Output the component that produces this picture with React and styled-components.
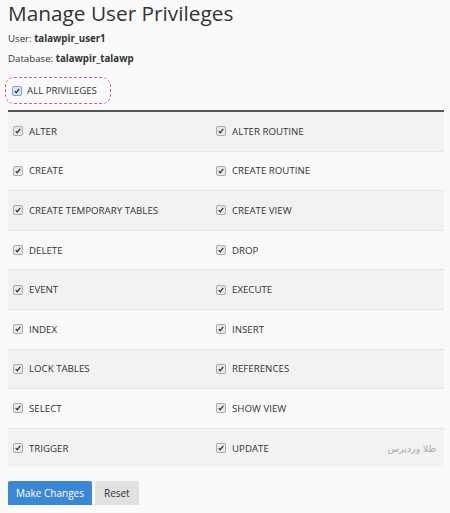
import React from "react";
import styled, { createGlobalStyle } from "styled-components";

const GlobalStyle = createGlobalStyle`
  body {
    margin: 0;
    background: #fafafa;
    font-family: "Open Sans", "Noto Sans", sans-serif;
    color: #333;
  }
`;

const privileges = [
  ["ALTER", "ALTER ROUTINE"],
  ["CREATE", "CREATE ROUTINE"],
  ["CREATE TEMPORARY TABLES", "CREATE VIEW"],
  ["DELETE", "DROP"],
  ["EVENT", "EXECUTE"],
  ["INDEX", "INSERT"],
  ["LOCK TABLES", "REFERENCES"],
  ["SELECT", "SHOW VIEW"],
  ["TRIGGER", "UPDATE"],
];

const Page = styled.div`
  padding: 0 6px 0 8px;
`;

const Title = styled.h1`
  margin: 0;
  font-size: 20.8px;
  font-weight: 400;
  line-height: 26px;
  color: #333;
`;

const Info = styled.p`
  margin: 0;
  font-size: 9.7px;
  line-height: 20px;
  b {
    font-weight: 700;
  }
`;

const InfoList = styled.div`
  padding-top: 3px;
`;

const AllBox = styled.label`
  display: inline-flex;
  align-items: center;
  gap: 5px;
  margin: 8px 0 6px -3px;
  padding: 0 13px 0 6px;
  height: 25px;
  border: 1px dashed #f0507a;
  border-radius: 9px;
  font-size: 9.7px;
`;

const Box = styled.span`
  display: inline-flex;
  align-items: center;
  justify-content: center;
  width: 8px;
  height: 8px;
  border: 1px solid ${(p) => (p.$focus ? "#7b9fe0" : "#aaa")};
  border-radius: 2px;
  background: ${(p) => (p.$focus ? "#dde6f7" : "#e9e9e9")};
  flex-shrink: 0;
  svg {
    display: block;
  }
`;

const Table = styled.div`
  border-top: 2px solid #555;
`;

const Row = styled.div`
  display: grid;
  grid-template-columns: 203px 1fr auto;
  align-items: center;
  height: 38.6px;
  padding: 0 8px 0 5px;
  background: ${(p) => (p.$odd ? "#f2f2f2" : "#f9f9f9")};
  border-top: ${(p) => (p.$first ? "none" : "1px solid #e6e6e6")};
`;

const Cell = styled.div`
  display: flex;
  align-items: center;
  gap: 6px;
  font-size: 9.7px;
  color: #333;
`;

const Mark = styled.span`
  font-family: "Noto Sans", "DejaVu Sans", sans-serif;
  font-size: 9.5px;
  color: #aaa;
  direction: rtl;
`;

const Actions = styled.div`
  display: flex;
  gap: 3px;
  margin-top: 14px;
`;

const Button = styled.button`
  height: 24px;
  padding: 0 ${(p) => (p.$primary ? "8px" : "9px")};
  border: none;
  border-radius: 2px;
  font-family: "Open Sans", sans-serif;
  font-size: 10px;
  background: ${(p) => (p.$primary ? "#3a88d5" : "#e1e1e1")};
  color: ${(p) => (p.$primary ? "#fff" : "#333")};
  box-shadow: ${(p) => (p.$primary ? "0 1px 0 #2a6fb5" : "0 1px 0 #cfcfcf")};
  cursor: pointer;
`;

function Check({ focus }) {
  return (
    <Box $focus={focus}>
      <svg width="6" height="6" viewBox="0 0 8 8">
        <path d="M1 4.2 L3 6.4 L7 1.2" fill="none" stroke="#333" strokeWidth="1.8" />
      </svg>
    </Box>
  );
}

export default function App() {
  return (
    <Page>
      <GlobalStyle />
      <Title>Manage User Privileges</Title>
      <InfoList>
        <Info>
          User: <b>talawpir_user1</b>
        </Info>
        <Info>
          Database: <b>talawpir_talawp</b>
        </Info>
      </InfoList>
      <AllBox>
        <Check focus />
        ALL PRIVILEGES
      </AllBox>
      <Table>
        {privileges.map(([a, b], i) => (
          <Row key={a} $odd={i % 2 === 0} $first={i === 0}>
            <Cell>
              <Check />
              {a}
            </Cell>
            <Cell>
              <Check />
              {b}
            </Cell>
            {i === privileges.length - 1 ? <Mark>طلا وردپرس</Mark> : <span />}
          </Row>
        ))}
      </Table>
      <Actions>
        <Button $primary>Make Changes</Button>
        <Button>Reset</Button>
      </Actions>
    </Page>
  );
}
